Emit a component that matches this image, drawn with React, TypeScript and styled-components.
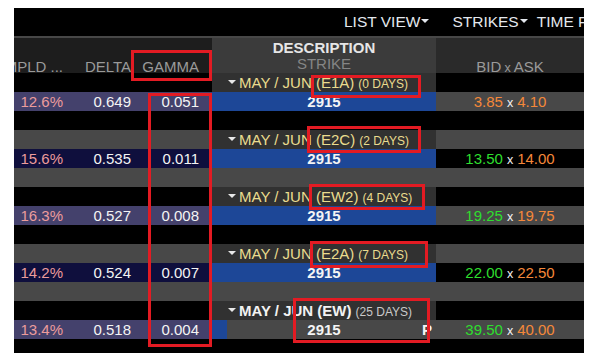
import React from "react";
import styled, { createGlobalStyle } from "styled-components";

const Global = createGlobalStyle`
  html, body { margin: 0; padding: 0; background: #ffffff; }
  body { font-family: "Liberation Sans", Arial, sans-serif; }
`;

const COLS = "62px 68px 68px 224px 148px";
const ORANGE = "#f5883a";
const GREEN = "#2ede2e";
const GRAY = "#484848";

const Page = styled.div`
  width: 597px;
  height: 363px;
  box-sizing: border-box;
  padding: 8px 13px 0 14px;
`;

const Frame = styled.div`
  position: relative;
  width: 570px;
  height: 345px;
  background: #000;
  overflow: hidden;
  display: flex;
  flex-direction: column;
`;

const Toolbar = styled.div`
  flex: none;
  height: 28px;
  display: flex;
  align-items: center;
  padding-left: 330px;
  color: #e4e8ee;
  font-size: 15.5px;
  white-space: nowrap;
`;

const ToolItem = styled.span<{ $gap: number }>`
  flex: none;
  display: inline-flex;
  align-items: center;
  margin-left: ${(p) => p.$gap}px;
`;

const Caret = styled.span`
  display: inline-block;
  width: 0;
  height: 0;
  border-left: 4.5px solid transparent;
  border-right: 4.5px solid transparent;
  border-top: 4.5px solid #e4e8ee;
  margin: 0 0 3px 1px;
`;

const HeaderRow = styled.div`
  flex: none;
  display: grid;
  grid-template-columns: ${COLS};
  height: 35px;
  border-top: 2px solid #474747;
`;

const HeadCell = styled.div<{ $bg: string }>`
  background: ${(p) => p.$bg};
  display: flex;
  justify-content: flex-end;
  padding: 20px 13px 0 0;
  color: #9a9a9a;
  font-size: 15px;
  line-height: 17px;
  white-space: nowrap;
`;

const DescHead = styled.div`
  background: #3b3b3b;
  display: flex;
  flex-direction: column;
  align-items: center;
  padding-top: 2px;
  font-size: 15px;
  line-height: 16px;
`;

const DescTitle = styled.span`
  color: #e6e6e6;
  font-weight: bold;
`;

const DescSub = styled.span`
  color: #858585;
`;

const BidHead = styled.div`
  background: #2a2a2a;
  display: flex;
  justify-content: center;
  align-items: baseline;
  padding-top: 20px;
  color: #9a9a9a;
  font-size: 15px;
  line-height: 17px;
`;

const Times = styled.span<{ $color: string; $gap: number }>`
  font-size: 12.5px;
  color: ${(p) => p.$color};
  margin: 0 ${(p) => p.$gap}px;
`;

const Row = styled.div`
  flex: none;
  display: grid;
  grid-template-columns: ${COLS};
  height: 19px;
  font-size: 15px;
  line-height: 19px;
  white-space: nowrap;
`;

const NumCell = styled.div<{ $bg: string; $color?: string; $rule?: boolean }>`
  background: ${(p) => p.$bg};
  color: ${(p) => p.$color ?? "#f4f4f4"};
  text-align: right;
  padding-right: 13px;
  box-shadow: ${(p) => (p.$rule ? "inset 0 -1px 0 #4242b4" : "none")};
`;

const Fill = styled.div<{ $bg: string }>`
  background: ${(p) => p.$bg};
`;

const GroupTitle = styled.div<{ $bold?: boolean }>`
  background: #313131;
  display: flex;
  align-items: baseline;
  padding-left: 16px;
  color: ${(p) => (p.$bold ? "#f2f2f2" : "#eadc8e")};
  font-weight: ${(p) => (p.$bold ? "bold" : "normal")};
`;

const Days = styled.span<{ $muted?: boolean }>`
  font-size: 12px;
  font-weight: normal;
  margin-left: 4px;
  color: ${(p) => (p.$muted ? "#c9c9c9" : "#eadc8e")};
`;

const TitleCaret = styled.span`
  align-self: center;
  display: inline-block;
  width: 0;
  height: 0;
  border-left: 4px solid transparent;
  border-right: 4px solid transparent;
  border-top: 4px solid #e8e8e8;
  margin: 0 3px 3px 0;
`;

const StrikeCell = styled.div<{ $partial?: boolean }>`
  display: grid;
  grid-template-columns: 15px 1fr 15px;
  background: ${(p) => (p.$partial ? GRAY : "#1d4797")};
  color: #f4f4f4;
  font-weight: bold;
`;

const StrikeStub = styled.div<{ $partial?: boolean }>`
  background: ${(p) => (p.$partial ? "#1d4797" : "transparent")};
`;

const StrikeValue = styled.div`
  text-align: center;
`;

const PutMark = styled.div`
  text-align: left;
  padding-left: 1px;
`;

const QuoteCell = styled.div<{ $bg: string }>`
  background: ${(p) => p.$bg};
  display: flex;
  justify-content: center;
  align-items: baseline;
`;

const Price = styled.span<{ $color: string }>`
  color: ${(p) => p.$color};
`;

const Annotation = styled.div<{ $x: number; $y: number; $w: number; $h: number }>`
  position: absolute;
  left: ${(p) => p.$x}px;
  top: ${(p) => p.$y}px;
  width: ${(p) => p.$w}px;
  height: ${(p) => p.$h}px;
  box-sizing: border-box;
  border: 3px solid #e31b23;
  pointer-events: none;
`;

type Group = {
  code: string;
  days: string;
  impld: string;
  delta: string;
  gamma: string;
  bid: string;
  ask: string;
  bidColor: string;
  last?: boolean;
};

const groups: Group[] = [
  { code: "E1A", days: "0 DAYS", impld: "12.6%", delta: "0.649", gamma: "0.051", bid: "3.85", ask: "4.10", bidColor: ORANGE },
  { code: "E2C", days: "2 DAYS", impld: "15.6%", delta: "0.535", gamma: "0.011", bid: "13.50", ask: "14.00", bidColor: GREEN },
  { code: "EW2", days: "4 DAYS", impld: "16.3%", delta: "0.527", gamma: "0.008", bid: "19.25", ask: "19.75", bidColor: GREEN },
  { code: "E2A", days: "7 DAYS", impld: "14.2%", delta: "0.524", gamma: "0.007", bid: "22.00", ask: "22.50", bidColor: GREEN },
  { code: "EW", days: "25 DAYS", impld: "13.4%", delta: "0.518", gamma: "0.004", bid: "39.50", ask: "40.00", bidColor: GREEN, last: true },
];

const boxes = [
  { x: 117, y: 42, w: 81, h: 31 },
  { x: 134, y: 85, w: 64, h: 254 },
  { x: 297, y: 67, w: 110, h: 23 },
  { x: 293, y: 118, w: 114, h: 27 },
  { x: 295, y: 176, w: 116, h: 26 },
  { x: 296, y: 233, w: 118, h: 27 },
  { x: 279, y: 290, w: 137, h: 45 },
];

function GroupRows({ g, index }: { g: Group; index: number }) {
  const dark = index % 2 === 0;
  const stripe = dark ? "#000" : GRAY;
  const dataBg = dark ? "#44416c" : "#0f0f3d";
  const quoteBg = dark ? GRAY : "#000";
  return (
    <>
      <Row>
        <Fill $bg={stripe} />
        <Fill $bg={stripe} />
        <Fill $bg={stripe} />
        <GroupTitle $bold={g.last}>
          <TitleCaret />
          MAY / JUN ({g.code})<Days $muted={g.last}>({g.days})</Days>
        </GroupTitle>
        <Fill $bg={stripe} />
      </Row>
      <Row>
        <NumCell $bg={dataBg} $color="#ec9c9c" $rule>{g.impld}</NumCell>
        <NumCell $bg={dataBg} $rule>{g.delta}</NumCell>
        <NumCell $bg={dataBg} $rule>{g.gamma}</NumCell>
        <StrikeCell $partial={g.last}>
          <StrikeStub $partial={g.last} />
          <StrikeValue>2915</StrikeValue>
          <PutMark>{g.last ? "P" : ""}</PutMark>
        </StrikeCell>
        <QuoteCell $bg={quoteBg}>
          <Price $color={g.bidColor}>{g.bid}</Price>
          <Times $color="#f4f4f4" $gap={4}>x</Times>
          <Price $color={ORANGE}>{g.ask}</Price>
        </QuoteCell>
      </Row>
      <Row>
        <Fill $bg={stripe} />
        <Fill $bg={stripe} />
        <Fill $bg={stripe} />
        <Fill $bg={stripe} />
        <Fill $bg={stripe} />
      </Row>
    </>
  );
}

export default function App() {
  return (
    <>
      <Global />
      <Page>
        <Frame>
          <Toolbar>
            <ToolItem $gap={0}>
              LIST VIEW
              <Caret />
            </ToolItem>
            <ToolItem $gap={23}>
              STRIKES
              <Caret />
            </ToolItem>
            <ToolItem $gap={9}>
              TIME FRAME
              <Caret />
            </ToolItem>
          </Toolbar>
          <HeaderRow>
            <HeadCell $bg="#1d1d1d">IMPLD ...</HeadCell>
            <HeadCell $bg="#1d1d1d">DELTA</HeadCell>
            <HeadCell $bg="#1d1d1d">GAMMA</HeadCell>
            <DescHead>
              <DescTitle>DESCRIPTION</DescTitle>
              <DescSub>STRIKE</DescSub>
            </DescHead>
            <BidHead>
              BID<Times $color="#9a9a9a" $gap={3}>x</Times>ASK
            </BidHead>
          </HeaderRow>
          {groups.map((g, i) => (
            <GroupRows key={g.code} g={g} index={i} />
          ))}
          {boxes.map((b, i) => (
            <Annotation key={i} $x={b.x} $y={b.y} $w={b.w} $h={b.h} />
          ))}
        </Frame>
      </Page>
    </>
  );
}
